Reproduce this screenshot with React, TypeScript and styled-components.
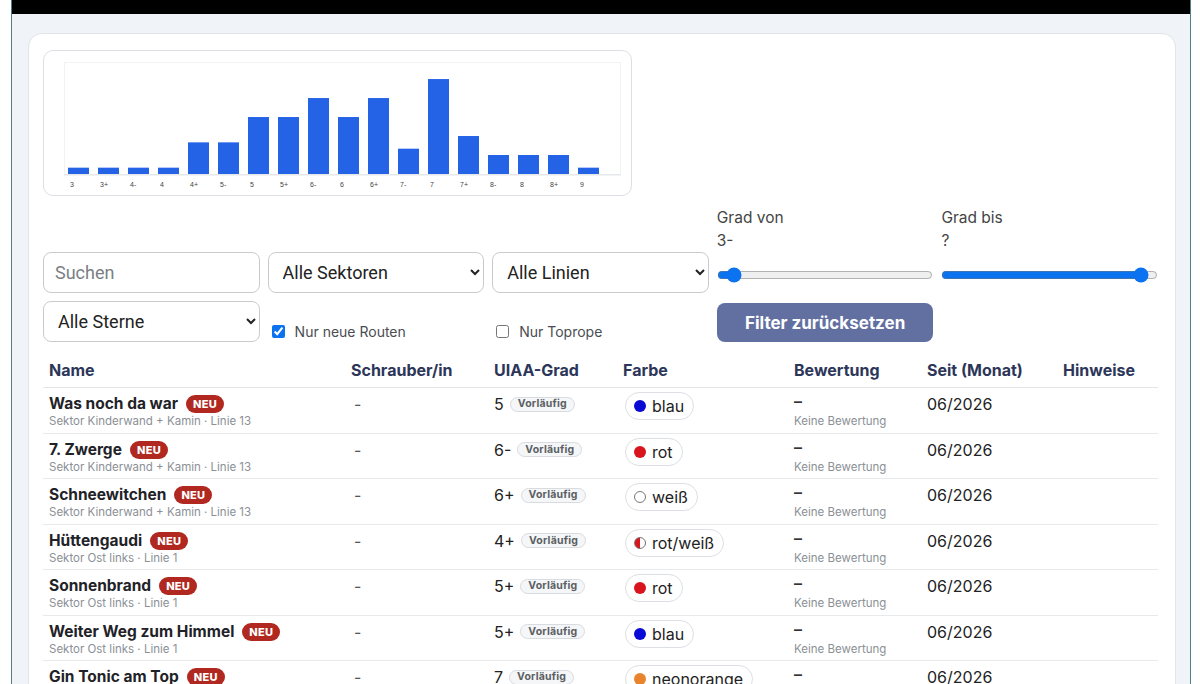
import styled, { createGlobalStyle } from "styled-components";

const GlobalStyle = createGlobalStyle`
  html, body { margin: 0; padding: 0; background: #ffffff; }
  body { font-family: Inter, "Noto Sans", sans-serif; color: #212529; }
  * { box-sizing: border-box; }
`;

const Frame = styled.div`
  margin-left: 11px;
  width: 1180px;
  min-height: 684px;
  background: #f0f3f8;
  border-left: 1px solid #4f8088;
  border-right: 1px solid #4f8088;
  overflow: hidden;
`;

const TopBar = styled.div`
  height: 14px;
  background: #000;
`;

const Card = styled.main`
  margin: 19px 14px 0 16px;
  min-height: 700px;
  background: #fff;
  border: 1px solid #e1e4e8;
  border-radius: 14px;
  padding: 16px 17px 0 14px;
`;

const ChartCard = styled.div`
  width: 589px;
  height: 146px;
  border: 1px solid #dcdfe4;
  border-radius: 10px;
  background: #fff;
`;

const Filters = styled.div`
  display: grid;
  grid-template-columns: repeat(5, 1fr);
  column-gap: 8px;
  row-gap: 8px;
  align-items: end;
  margin-top: 11px;
`;

const TextInput = styled.input`
  height: 41px;
  width: 100%;
  border: 1px solid #c9cbcf;
  border-radius: 8px;
  padding: 0 11px;
  font: 18px Roboto, "Liberation Sans", sans-serif;
  color: #222;
  &::placeholder { color: #7b7f85; }
`;

const Select = styled.select`
  height: 41px;
  width: 100%;
  border: 1px solid #c9cbcf;
  border-radius: 8px;
  padding: 0 10px;
  background: #fff;
  font: 18px Roboto, "Liberation Sans", sans-serif;
  color: #222;
`;

const GradBlock = styled.div`
  display: flex;
  flex-direction: column;
  padding-bottom: 10px;
`;

const GradLabel = styled.div`
  font-size: 15.5px;
  line-height: 22px;
  color: #444;
`;

const GradValue = styled.div`
  font-size: 15.5px;
  line-height: 24px;
  color: #444;
`;

const Range = styled.input`
  width: 100%;
  margin: 14px 0 0;
  accent-color: #0b72f0;
`;

const CheckLabel = styled.label`
  display: flex;
  align-items: center;
  gap: 10px;
  height: 20px;
  margin-bottom: 1px;
  font-size: 14px;
  color: #4a4d52;
  input { margin: 0 0 0 4px; width: 13px; height: 13px; accent-color: #0b72f0; }
`;

const ResetButton = styled.button`
  height: 39px;
  width: 100%;
  border: none;
  border-radius: 8px;
  background: #6270a1;
  color: #fff;
  font: 700 17px Inter, "Noto Sans", sans-serif;
`;

const Table = styled.table`
  width: 100%;
  margin-top: 9px;
  border-collapse: collapse;
  table-layout: fixed;
`;

const Th = styled.th`
  text-align: left;
  padding: 9px 6px 7px;
  font-size: 16px;
  line-height: 20px;
  font-weight: 700;
  color: #2c3659;
  border-bottom: 1px solid #e3e5e8;
`;

const Tr = styled.tr`
  border-bottom: 1px solid #e8e9eb;
`;

const Td = styled.td`
  vertical-align: top;
  padding: 6px 6px 4.5px;
  font-size: 16px;
  line-height: 20px;
  color: #222;
`;

const NameLine = styled.div`
  display: flex;
  align-items: center;
  gap: 8px;
  font-size: 15.5px;
  font-weight: 700;
  color: #1f2328;
`;

const NewBadge = styled.span`
  display: inline-flex;
  align-items: center;
  height: 18px;
  padding: 0 7px;
  border-radius: 9px;
  background: #b0281f;
  color: #fff;
  font-size: 11px;
  font-weight: 800;
  letter-spacing: 0.3px;
`;

const SubLine = styled.div`
  font-size: 11.5px;
  line-height: 14px;
  color: #8b9096;
`;

const Dash = styled.span`
  color: #555;
  padding-left: 3px;
`;

const GradeLine = styled.div`
  display: flex;
  align-items: center;
  gap: 6px;
`;

const Pending = styled.span`
  display: inline-flex;
  align-items: center;
  height: 15px;
  padding: 0 7px;
  border: 1px solid #d8dbdf;
  border-radius: 8px;
  background: #f5f6f8;
  font-size: 10.5px;
  font-weight: 700;
  letter-spacing: 0.2px;
  color: #5b5f64;
`;

const ColorPill = styled.span`
  display: inline-flex;
  align-items: center;
  gap: 6px;
  height: 28px;
  margin: -2px 0 0 2px;
  padding: 0 9px 0 8px;
  border: 1px solid #dcdfe3;
  border-radius: 14px;
  background: #fff;
  font-size: 16px;
`;

const Dot = styled.span<{ $fill: string; $ring?: boolean }>`
  width: 12px;
  height: 12px;
  border-radius: 50%;
  background: ${(p) => p.$fill};
  border: ${(p) => (p.$ring ? "1px solid #777" : "none")};
`;

const RatingDash = styled.div`
  font-size: 16px;
  line-height: 20px;
  font-weight: 600;
  color: #333;
  margin-top: -3px;
`;

const RatingNote = styled.div`
  font-size: 11.5px;
  line-height: 14px;
  color: #8b9096;
  margin-top: 3px;
`;

const grades = ["3", "3+", "4-", "4", "4+", "5-", "5", "5+", "6-", "6", "6+", "7-", "7", "7+", "8-", "8", "8+", "9"];
const counts = [1, 1, 1, 1, 5, 5, 9, 9, 12, 9, 12, 4, 15, 6, 3, 3, 3, 1];

function GradeChart() {
  return (
    <ChartCard>
      <svg width="587" height="144" viewBox="0 0 587 144">
        <rect x="20.5" y="11.5" width="556" height="113" fill="#fff" stroke="#f1f2f4" />
        {counts.map((c, i) => {
          const h = c * 6.33;
          return (
            <g key={i}>
              <rect x={24 + i * 30} y={123 - h} width={21} height={h} fill="#2463e6" />
              <text x={26 + i * 30} y={136} fontSize="7" fill="#444" fontFamily="Liberation Sans, sans-serif">
                {grades[i]}
              </text>
            </g>
          );
        })}
        <line x1="20" y1="123.5" x2="577" y2="123.5" stroke="#e6e8eb" />
      </svg>
    </ChartCard>
  );
}

type Route = { name: string; sub: string; grade: string; color: string; dot: string; ring?: boolean };

const rw = "linear-gradient(90deg, #d8141c 50%, #fff 50%)";

const routes: Route[] = [
  { name: "Was noch da war", sub: "Sektor Kinderwand + Kamin · Linie 13", grade: "5", color: "blau", dot: "#0a0ad6" },
  { name: "7. Zwerge", sub: "Sektor Kinderwand + Kamin · Linie 13", grade: "6-", color: "rot", dot: "#d8141c" },
  { name: "Schneewitchen", sub: "Sektor Kinderwand + Kamin · Linie 13", grade: "6+", color: "weiß", dot: "#fff", ring: true },
  { name: "Hüttengaudi", sub: "Sektor Ost links · Linie 1", grade: "4+", color: "rot/weiß", dot: rw, ring: true },
  { name: "Sonnenbrand", sub: "Sektor Ost links · Linie 1", grade: "5+", color: "rot", dot: "#d8141c" },
  { name: "Weiter Weg zum Himmel", sub: "Sektor Ost links · Linie 1", grade: "5+", color: "blau", dot: "#0a0ad6" },
  { name: "Gin Tonic am Top", sub: "Sektor Ost links · Linie 1", grade: "7", color: "neonorange", dot: "#e8842c" },
];

export default function App() {
  return (
    <>
      <GlobalStyle />
      <Frame>
        <TopBar />
        <Card>
          <GradeChart />
          <Filters>
            <TextInput placeholder="Suchen" />
            <Select defaultValue="">
              <option value="">Alle Sektoren</option>
            </Select>
            <Select defaultValue="">
              <option value="">Alle Linien</option>
            </Select>
            <GradBlock>
              <GradLabel>Grad von</GradLabel>
              <GradValue>3-</GradValue>
              <Range type="range" min={0} max={22} defaultValue={1} />
            </GradBlock>
            <GradBlock>
              <GradLabel>Grad bis</GradLabel>
              <GradValue>?</GradValue>
              <Range type="range" min={0} max={22} defaultValue={21} />
            </GradBlock>
            <Select defaultValue="">
              <option value="">Alle Sterne</option>
            </Select>
            <CheckLabel>
              <input type="checkbox" defaultChecked />
              Nur neue Routen
            </CheckLabel>
            <CheckLabel>
              <input type="checkbox" />
              Nur Toprope
            </CheckLabel>
            <ResetButton>Filter zurücksetzen</ResetButton>
          </Filters>
          <Table>
            <colgroup>
              <col style={{ width: 302 }} />
              <col style={{ width: 143 }} />
              <col style={{ width: 129 }} />
              <col style={{ width: 171 }} />
              <col style={{ width: 133 }} />
              <col style={{ width: 136 }} />
              <col />
            </colgroup>
            <thead>
              <tr>
                <Th>Name</Th>
                <Th>Schrauber/in</Th>
                <Th>UIAA-Grad</Th>
                <Th>Farbe</Th>
                <Th>Bewertung</Th>
                <Th>Seit (Monat)</Th>
                <Th>Hinweise</Th>
              </tr>
            </thead>
            <tbody>
              {routes.map((r) => (
                <Tr key={r.name}>
                  <Td>
                    <NameLine>
                      {r.name}
                      <NewBadge>NEU</NewBadge>
                    </NameLine>
                    <SubLine>{r.sub}</SubLine>
                  </Td>
                  <Td>
                    <Dash>-</Dash>
                  </Td>
                  <Td>
                    <GradeLine>
                      {r.grade}
                      <Pending>Vorläufig</Pending>
                    </GradeLine>
                  </Td>
                  <Td>
                    <ColorPill>
                      <Dot $fill={r.dot} $ring={r.ring} />
                      {r.color}
                    </ColorPill>
                  </Td>
                  <Td>
                    <RatingDash>–</RatingDash>
                    <RatingNote>Keine Bewertung</RatingNote>
                  </Td>
                  <Td>06/2026</Td>
                  <Td />
                </Tr>
              ))}
            </tbody>
          </Table>
        </Card>
      </Frame>
    </>
  );
}
